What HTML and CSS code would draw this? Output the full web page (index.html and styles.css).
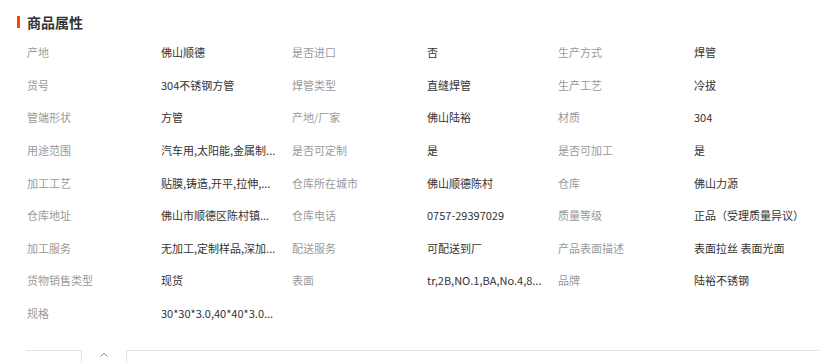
FILE: index.html
```html
<!DOCTYPE html>
<html lang="zh-CN">
<head>
<meta charset="utf-8">
<title>商品属性</title>
<link rel="stylesheet" href="styles.css">
</head>
<body>
<section class="attrs">
  <h2 class="attrs-title">商品属性</h2>
  <div class="attrs-grid">
    <span class="k">产地</span><span class="v">佛山顺德</span>
    <span class="k">是否进口</span><span class="v">否</span>
    <span class="k">生产方式</span><span class="v">焊管</span>

    <span class="k">货号</span><span class="v">304不锈钢方管</span>
    <span class="k">焊管类型</span><span class="v">直缝焊管</span>
    <span class="k">生产工艺</span><span class="v">冷拔</span>

    <span class="k">管端形状</span><span class="v">方管</span>
    <span class="k">产地/厂家</span><span class="v">佛山陆裕</span>
    <span class="k">材质</span><span class="v">304</span>

    <span class="k">用途范围</span><span class="v">汽车用,太阳能,金属制...</span>
    <span class="k">是否可定制</span><span class="v">是</span>
    <span class="k">是否可加工</span><span class="v">是</span>

    <span class="k">加工工艺</span><span class="v">贴膜,铸造,开平,拉伸,...</span>
    <span class="k">仓库所在城市</span><span class="v">佛山顺德陈村</span>
    <span class="k">仓库</span><span class="v">佛山力源</span>

    <span class="k">仓库地址</span><span class="v">佛山市顺德区陈村镇...</span>
    <span class="k">仓库电话</span><span class="v">0757-29397029</span>
    <span class="k">质量等级</span><span class="v">正品（受理质量异议）</span>

    <span class="k">加工服务</span><span class="v">无加工,定制样品,深加...</span>
    <span class="k">配送服务</span><span class="v">可配送到厂</span>
    <span class="k">产品表面描述</span><span class="v">表面拉丝 表面光面</span>

    <span class="k">货物销售类型</span><span class="v">现货</span>
    <span class="k">表面</span><span class="v">tr,2B,NO.1,BA,No.4,8...</span>
    <span class="k">品牌</span><span class="v">陆裕不锈钢</span>

    <span class="k">规格</span><span class="v">30*30*3.0,40*40*3.0...</span>
  </div>
  <div class="fold-bar">
    <div class="fold-left"></div>
    <div class="fold-toggle">
      <svg width="8" height="5" viewBox="0 0 8 5"><polyline points="0.5,4.5 4,1 7.5,4.5" fill="none" stroke="#9a9a9a" stroke-width="1"/></svg>
    </div>
    <div class="fold-right"></div>
  </div>
</section>
</body>
</html>
```
FILE: styles.css
```css
html, body {
  margin: 0;
  padding: 0;
  background: #fff;
}
body {
  font-family: "Noto Sans CJK SC", "Liberation Sans", sans-serif;
  font-size: 11px;
  color: #333;
  overflow: hidden;
}
.attrs {
  padding-left: 17px;
}
.attrs-title {
  margin: 12px 0 0 0;
  height: 20px;
  line-height: 20px;
  font-size: 14px;
  font-weight: bold;
  color: #333;
  display: flex;
  align-items: center;
  gap: 7px;
}
.attrs-title::before {
  content: "";
  width: 3px;
  height: 12px;
  background: #f40;
}
.attrs-grid {
  margin: 3.7px 0 0 10px;
  display: grid;
  grid-template-columns: 134px 131px 135px 131px 136px 1fr;
  grid-auto-rows: 32.625px;
  align-items: center;
}
.k {
  color: #9a9a9a;
  white-space: nowrap;
}
.v {
  color: #333;
  white-space: nowrap;
}
.fold-bar {
  margin: 20.7px 0 0 9px;
  display: flex;
  height: 20px;
}
.fold-left {
  width: 55px;
  border-top: 1px solid #e3e3e3;
  border-right: 1px solid #e3e3e3;
}
.fold-toggle {
  width: 44px;
  display: flex;
  justify-content: center;
  padding-top: 2px;
  box-sizing: border-box;
}
.fold-toggle svg {
  display: block;
}
.fold-right {
  flex: 1;
  border-top: 1px solid #e3e3e3;
  border-left: 1px solid #e3e3e3;
}
```
